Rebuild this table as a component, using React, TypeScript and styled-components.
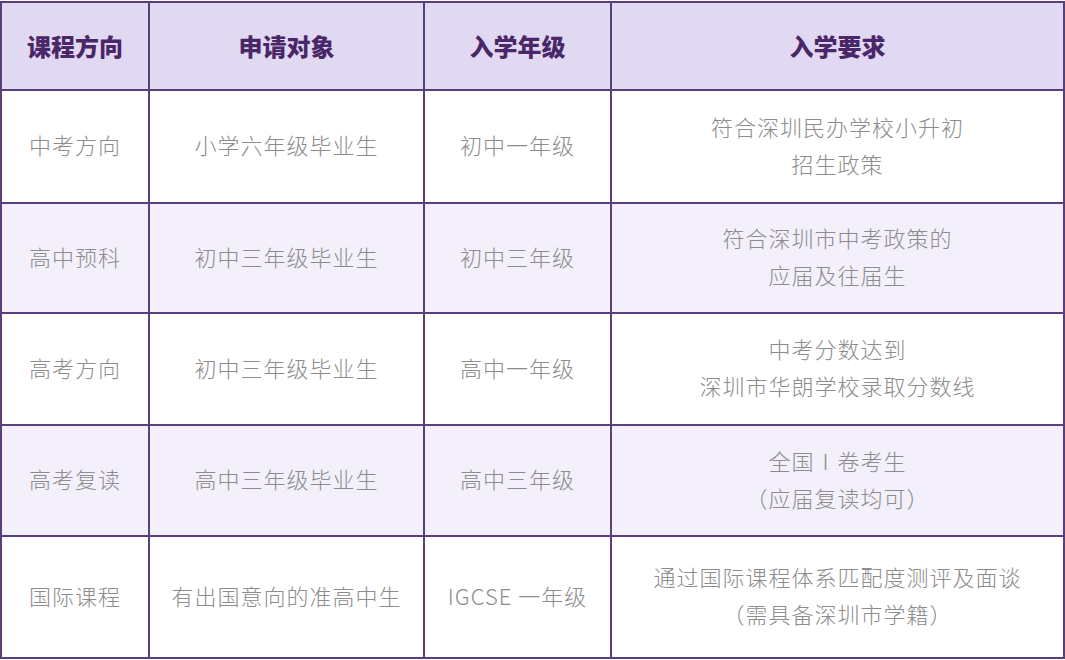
import React from "react";
import styled, { createGlobalStyle } from "styled-components";

const GlobalStyle = createGlobalStyle`
  html, body {
    margin: 0;
    padding: 0;
    background: #ffffff;
  }
  body {
    font-family: "Noto Sans CJK SC", "Noto Sans", sans-serif;
  }
`;

interface RowData {
  course: string;
  target: string;
  grade: string;
  require: string[];
  height: number;
}

const headers = ["课程方向", "申请对象", "入学年级", "入学要求"];
const colWidths = [148, 275, 187, 453];

const rows: RowData[] = [
  {
    course: "中考方向",
    target: "小学六年级毕业生",
    grade: "初中一年级",
    require: ["符合深圳民办学校小升初", "招生政策"],
    height: 113,
  },
  {
    course: "高中预科",
    target: "初中三年级毕业生",
    grade: "初中三年级",
    require: ["符合深圳市中考政策的", "应届及往届生"],
    height: 110,
  },
  {
    course: "高考方向",
    target: "初中三年级毕业生",
    grade: "高中一年级",
    require: ["中考分数达到", "深圳市华朗学校录取分数线"],
    height: 112,
  },
  {
    course: "高考复读",
    target: "高中三年级毕业生",
    grade: "高中三年级",
    require: ["全国Ⅰ卷考生", "（应届复读均可）"],
    height: 111,
  },
  {
    course: "国际课程",
    target: "有出国意向的准高中生",
    grade: "IGCSE 一年级",
    require: ["通过国际课程体系匹配度测评及面谈", "（需具备深圳市学籍）"],
    height: 122,
  },
];

export default function App() {
  return (
    <>
      <GlobalStyle />
      <Page>
        <Table>
          <colgroup>
            {colWidths.map((w, i) => (
              <col key={i} style={{ width: w }} />
            ))}
          </colgroup>
          <thead>
            <HeadRow>
              {headers.map((h) => (
                <HeadCell key={h}>{h}</HeadCell>
              ))}
            </HeadRow>
          </thead>
          <tbody>
            {rows.map((row, index) => (
              <BodyRow key={row.course} striped={index % 2 === 1} style={{ height: row.height }}>
                <Cell>{row.course}</Cell>
                <Cell>{row.target}</Cell>
                <Cell>{row.grade}</Cell>
                <Cell>
                  {row.require.map((line) => (
                    <Line key={line}>{line}</Line>
                  ))}
                </Cell>
              </BodyRow>
            ))}
          </tbody>
        </Table>
      </Page>
    </>
  );
}

const Page = styled.div`
  width: 1065px;
  height: 660px;
  padding: 1px 0 0 0;
  box-sizing: border-box;
  overflow: hidden;
`;

const Table = styled.table`
  width: 1063px;
  border-collapse: collapse;
  table-layout: fixed;
  border: 2px solid #5b3f7c;
`;

const HeadRow = styled.tr`
  height: 88px;
  background-color: #e1d8f1;
`;

const HeadCell = styled.th`
  border: 2px solid #5b3f7c;
  color: #4a2768;
  font-size: 24px;
  font-weight: 900;
  text-align: center;
  vertical-align: middle;
  padding: 0 0 2px 0;
`;

const BodyRow = styled.tr<{ striped: boolean }>`
  background-color: ${(props) => (props.striped ? "#f3effb" : "#ffffff")};
`;

const Cell = styled.td`
  border: 2px solid #5b3f7c;
  color: #8c8c8c;
  font-size: 22px;
  font-weight: 300;
  letter-spacing: 1px;
  text-align: center;
  vertical-align: middle;
  padding: 0 4px 4px 4px;
  line-height: 37px;
`;

const Line = styled.div`
  white-space: nowrap;
`;
